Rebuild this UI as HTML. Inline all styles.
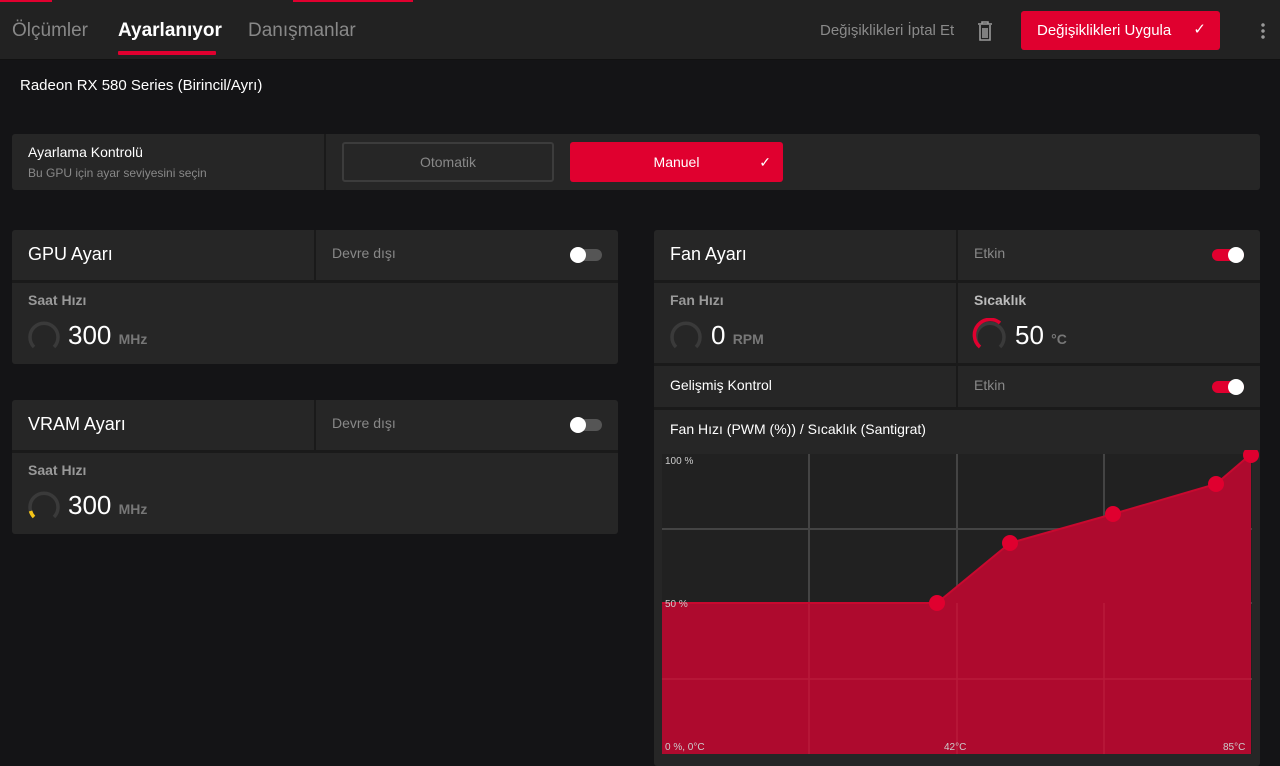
<!DOCTYPE html><html><head><meta charset="utf-8"><style>
*{margin:0;padding:0;box-sizing:border-box}
body{width:1280px;height:766px;background:#141416;font-family:"Liberation Sans",sans-serif;color:#fff;position:relative;overflow:hidden}
.a{position:absolute}
.bx{position:absolute;background:#262626;border-radius:3px}
.g{color:#8a8a8a}
.tg{position:absolute;width:32px;height:12px;border-radius:6px}
.tg i{position:absolute;top:-2px;width:16px;height:16px;border-radius:50%;background:#fff}
</style></head><body>
<div class="a" style="left:0;top:0;width:1280px;height:60px;background:#222;border-bottom:1px solid #111"></div>
<div class="a" style="left:0;top:0;width:52px;height:2px;background:#e0002f"></div>
<div class="a" style="left:293px;top:0;width:120px;height:2px;background:#e0002f"></div>
<div class="a g" style="left:12px;top:20px;font-size:19px;color:#888">Ölçümler</div>
<div class="a" style="left:118px;top:20px;font-size:19px;font-weight:bold">Ayarlanıyor</div>
<div class="a" style="left:118px;top:51px;width:98px;height:4px;background:#e0002f;border-radius:1px"></div>
<div class="a" style="left:248px;top:20px;font-size:19px;color:#888">Danışmanlar</div>
<div class="a" style="left:820px;top:22px;font-size:15px;color:#8a8a8a">Değişiklikleri İptal Et</div>
<svg class="a" style="left:976px;top:20px" width="18" height="22" viewBox="0 0 18 22"><path d="M2 4h14M6 4V2h6v2M4 5v15h10V5M7 8v10M9 8v10M11 8v10" stroke="#999" stroke-width="1.6" fill="none"/></svg>
<div class="a" style="left:1021px;top:11px;width:199px;height:39px;background:#e0002f;border-radius:3px;font-size:15px;padding:11px 16px">Değişiklikleri Uygula<span style="position:absolute;right:14px;top:9px">✓</span></div>
<div class="a" style="left:1261px;top:22px;width:4px;height:18px;background:radial-gradient(circle,#999 1.5px,transparent 2px) 0 0/4px 6px"></div>
<div class="a" style="left:20px;top:77px;font-size:15px">Radeon RX 580 Series (Birincil/Ayrı)</div>

<div class="bx" style="left:12px;top:134px;width:1248px;height:56px"></div>
<div class="a" style="left:324px;top:134px;width:2px;height:56px;background:#1a1a1a"></div>
<div class="a" style="left:28px;top:144px;font-size:14px">Ayarlama Kontrolü</div>
<div class="a" style="left:28px;top:166px;font-size:12px;color:#888">Bu GPU için ayar seviyesini seçin</div>
<div class="a" style="left:342px;top:142px;width:212px;height:40px;border:2px solid #3c3c3c;border-radius:3px;text-align:center;line-height:36px;font-size:14px;color:#888">Otomatik</div>
<div class="a" style="left:570px;top:142px;width:213px;height:40px;background:#e0002f;border-radius:3px;text-align:center;line-height:40px;font-size:14px">Manuel<span style="position:absolute;right:12px">✓</span></div>

<!-- GPU -->
<div class="bx" style="left:12px;top:230px;width:606px;height:134px"></div>
<div class="a" style="left:12px;top:280px;width:606px;height:3px;background:#1a1a1a"></div>
<div class="a" style="left:314px;top:230px;width:2px;height:50px;background:#1a1a1a"></div>
<div class="a" style="left:28px;top:244px;font-size:18px">GPU Ayarı</div>
<div class="a" style="left:332px;top:245px;font-size:14px;color:#888">Devre dışı</div>
<div class="tg" style="left:570px;top:249px;background:#555"><i style="left:0"></i></div>
<div class="a" style="left:28px;top:292px;font-size:14px;font-weight:bold;color:#999">Saat Hızı</div>
<svg class="a" style="left:26px;top:318px" width="36" height="32"><path d="M8 29A14 14 0 1 1 28 29" stroke="#3a3a3a" stroke-width="3.5" fill="none"/></svg>
<div class="a" style="left:68px;top:320px;font-size:26px">300 <span style="font-size:14px;color:#777;font-weight:bold">MHz</span></div>

<!-- VRAM -->
<div class="bx" style="left:12px;top:400px;width:606px;height:134px"></div>
<div class="a" style="left:12px;top:450px;width:606px;height:3px;background:#1a1a1a"></div>
<div class="a" style="left:314px;top:400px;width:2px;height:50px;background:#1a1a1a"></div>
<div class="a" style="left:28px;top:414px;font-size:18px">VRAM Ayarı</div>
<div class="a" style="left:332px;top:415px;font-size:14px;color:#888">Devre dışı</div>
<div class="tg" style="left:570px;top:419px;background:#555"><i style="left:0"></i></div>
<div class="a" style="left:28px;top:462px;font-size:14px;font-weight:bold;color:#999">Saat Hızı</div>
<svg class="a" style="left:26px;top:488px" width="36" height="32"><path d="M8 29A14 14 0 1 1 28 29" stroke="#3a3a3a" stroke-width="3.5" fill="none"/><path d="M8 29A14 14 0 0 1 4.5 23" stroke="#f5c518" stroke-width="3.5" fill="none"/></svg>
<div class="a" style="left:68px;top:490px;font-size:26px">300 <span style="font-size:14px;color:#777;font-weight:bold">MHz</span></div>

<!-- Fan -->
<div class="bx" style="left:654px;top:230px;width:606px;height:536px"></div>
<div class="a" style="left:654px;top:280px;width:606px;height:3px;background:#1a1a1a"></div>
<div class="a" style="left:654px;top:363px;width:606px;height:3px;background:#1a1a1a"></div>
<div class="a" style="left:654px;top:407px;width:606px;height:3px;background:#1a1a1a"></div>
<div class="a" style="left:956px;top:230px;width:2px;height:177px;background:#1a1a1a"></div>
<div class="a" style="left:670px;top:244px;font-size:18px">Fan Ayarı</div>
<div class="a" style="left:974px;top:245px;font-size:14px;color:#888">Etkin</div>
<div class="tg" style="left:1212px;top:249px;background:#e0002f"><i style="left:16px"></i></div>
<div class="a" style="left:670px;top:292px;font-size:14px;font-weight:bold;color:#999">Fan Hızı</div>
<svg class="a" style="left:668px;top:318px" width="36" height="32"><path d="M8 29A14 14 0 1 1 28 29" stroke="#3a3a3a" stroke-width="3.5" fill="none"/></svg>
<div class="a" style="left:711px;top:320px;font-size:26px">0 <span style="font-size:14px;color:#777;font-weight:bold">RPM</span></div>
<div class="a" style="left:974px;top:292px;font-size:14px;font-weight:bold;color:#bbb">Sıcaklık</div>
<svg class="a" style="left:972px;top:318px" width="36" height="32"><path d="M8 29A14 14 0 1 1 28 29" stroke="#3a3a3a" stroke-width="3.5" fill="none"/><path d="M8 29A14 14 0 0 1 28 5" stroke="#e0002f" stroke-width="3.5" fill="none"/></svg>
<div class="a" style="left:1015px;top:320px;font-size:26px">50 <span style="font-size:14px;color:#777;font-weight:bold">°C</span></div>
<div class="a" style="left:670px;top:377px;font-size:14px">Gelişmiş Kontrol</div>
<div class="a" style="left:974px;top:377px;font-size:14px;color:#888">Etkin</div>
<div class="tg" style="left:1212px;top:381px;background:#e0002f"><i style="left:16px"></i></div>
<div class="a" style="left:670px;top:421px;font-size:14px">Fan Hızı (PWM (%)) / Sıcaklık (Santigrat)</div>
<svg class="a" style="left:654px;top:450px" width="606" height="310">
<rect x="8" y="4" width="590" height="300" fill="#212121"/>
<g stroke="#444" stroke-width="2"><path d="M155 4V304M303 4V304M450 4V304M8 79H598M8 229H598M8 153H598"/></g>
<path d="M8 153H283L356 93L459 64L562 34L597 4V304H8Z" fill="#ae0a2e"/>
<g stroke="#b81a3a" stroke-width="1.5"><path d="M155 153V304M303 153V304M450 153V304M8 229H597"/></g>
<path d="M8 153H283L356 93L459 64L562 34L597 4" stroke="#c8092f" stroke-width="2" fill="none"/>
<g fill="#e0002f"><circle cx="283" cy="153" r="8"/><circle cx="356" cy="93" r="8"/><circle cx="459" cy="64" r="8"/><circle cx="562" cy="34" r="8"/><circle cx="597" cy="5" r="8"/></g>
<g fill="#ccc" font-size="10" font-family="Liberation Sans"><text x="11" y="14">100 %</text><text x="11" y="157">50 %</text><text x="11" y="300">0 %, 0°C</text><text x="290" y="300">42°C</text><text x="569" y="300">85°C</text></g>
</svg>
</body></html>
